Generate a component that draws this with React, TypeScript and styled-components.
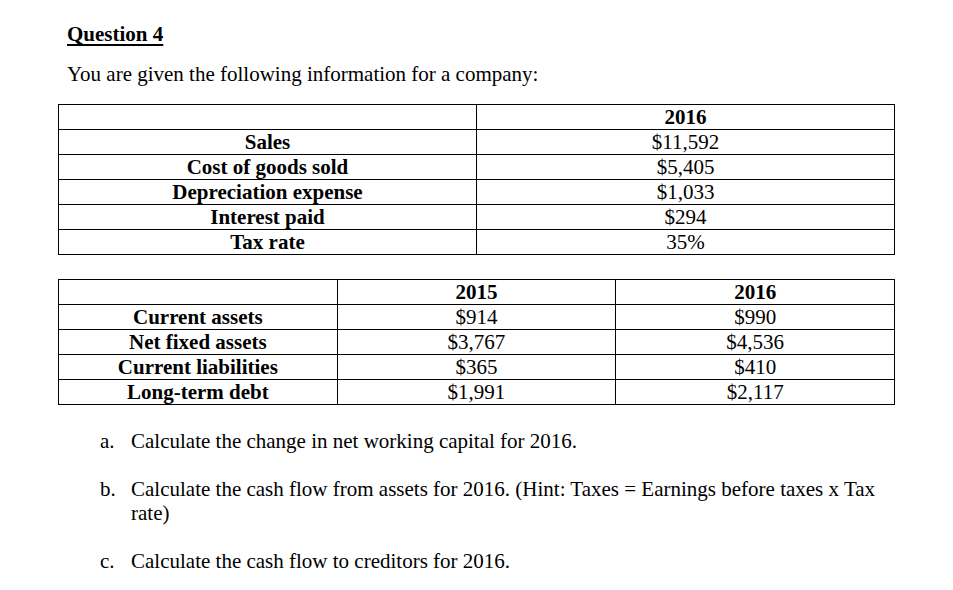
import React, { FunctionComponent } from 'react';
import styled, { createGlobalStyle } from 'styled-components';

const GlobalStyle = createGlobalStyle`
  body {
    margin: 0;
    background: #ffffff;
    color: #000000;
    font-family: 'Liberation Serif', 'Times New Roman', serif;
  }
`;

const incomeRows = [
  { label: 'Sales', value: '$11,592' },
  { label: 'Cost of goods sold', value: '$5,405' },
  { label: 'Depreciation expense', value: '$1,033' },
  { label: 'Interest paid', value: '$294' },
  { label: 'Tax rate', value: '35%' },
];

const balanceRows = [
  { label: 'Current assets', y2015: '$914', y2016: '$990' },
  { label: 'Net fixed assets', y2015: '$3,767', y2016: '$4,536' },
  { label: 'Current liabilities', y2015: '$365', y2016: '$410' },
  { label: 'Long-term debt', y2015: '$1,991', y2016: '$2,117' },
];

const tasks = [
  { marker: 'a.', text: 'Calculate the change in net working capital for 2016.' },
  {
    marker: 'b.',
    text: 'Calculate the cash flow from assets for 2016. (Hint: Taxes = Earnings before taxes x Tax rate)',
  },
  { marker: 'c.', text: 'Calculate the cash flow to creditors for 2016.' },
];

const Page = styled.div`
  width: 837px;
  padding: 22px 0 0 58px;
  font-size: 21px;
  line-height: 24px;
`;

const Heading = styled.h1`
  margin: 0 0 16px 9px;
  font-size: 21px;
  line-height: 24px;
  font-weight: bold;
  text-decoration: underline;
  text-decoration-thickness: 2px;
  text-underline-offset: 3px;
`;

const Intro = styled.p`
  margin: 0 0 18px 9px;
`;

type TableProps = {
  spacing?: string;
};

const DataTable = styled.table<TableProps>`
  width: 837px;
  border-collapse: collapse;
  table-layout: fixed;
  margin-bottom: ${({ spacing }) => spacing || '0'};
`;

type CellProps = {
  bold?: boolean;
};

const Cell = styled.td<CellProps>`
  border: 1px solid #000000;
  padding: 0;
  height: 24px;
  line-height: 24px;
  text-align: center;
  font-weight: ${({ bold }) => (bold ? 'bold' : 'normal')};
  white-space: nowrap;
`;

const TaskList = styled.div`
  display: flex;
  flex-direction: column;
  gap: 24px;
  margin-top: 24px;
  padding-left: 42px;
`;

const Task = styled.div`
  display: flex;
`;

const Marker = styled.span`
  flex: 0 0 31px;
`;

const TaskText = styled.span`
  flex: 1;
`;

const App: FunctionComponent = () => {
  return (
    <>
      <GlobalStyle />
      <Page>
        <Heading>Question 4</Heading>
        <Intro>You are given the following information for a company:</Intro>

        <DataTable spacing='24px'>
          <tbody>
            <tr>
              <Cell />
              <Cell bold>2016</Cell>
            </tr>
            {incomeRows.map((row, i) => (
              <tr key={i}>
                <Cell bold>{row.label}</Cell>
                <Cell>{row.value}</Cell>
              </tr>
            ))}
          </tbody>
        </DataTable>

        <DataTable>
          <tbody>
            <tr>
              <Cell />
              <Cell bold>2015</Cell>
              <Cell bold>2016</Cell>
            </tr>
            {balanceRows.map((row, i) => (
              <tr key={i}>
                <Cell bold>{row.label}</Cell>
                <Cell>{row.y2015}</Cell>
                <Cell>{row.y2016}</Cell>
              </tr>
            ))}
          </tbody>
        </DataTable>

        <TaskList>
          {tasks.map((task, i) => (
            <Task key={i}>
              <Marker>{task.marker}</Marker>
              <TaskText>{task.text}</TaskText>
            </Task>
          ))}
        </TaskList>
      </Page>
    </>
  );
};

export default App;
